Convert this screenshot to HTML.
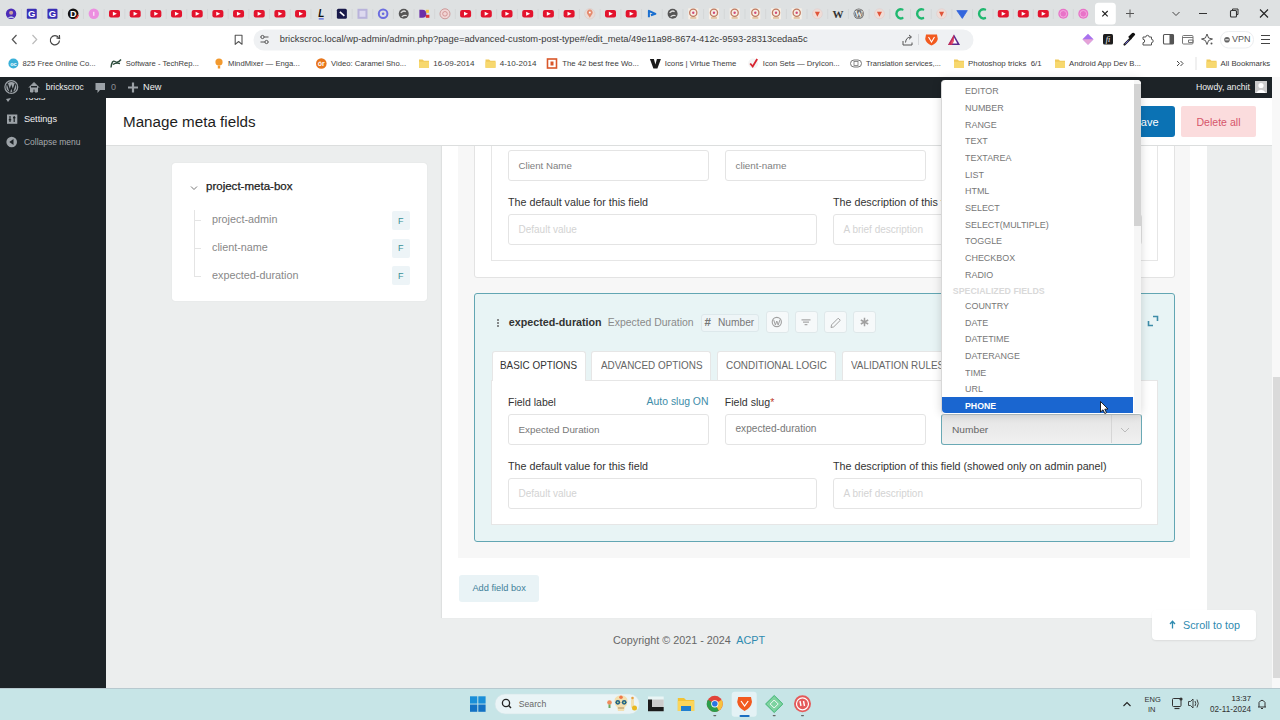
<!DOCTYPE html>
<html><head><meta charset="utf-8"><style>
*{box-sizing:border-box;margin:0;padding:0}
html,body{width:1280px;height:720px;overflow:hidden;background:#fff;font-family:"Liberation Sans",sans-serif;position:relative}
.a{position:absolute}
.t{position:absolute;white-space:nowrap;line-height:1}
svg{position:absolute;overflow:visible}
</style></head><body>
<div class="a" style="left:0px;top:0px;width:1280px;height:26px;background:#dee1e2"></div>
<div class="a" style="left:0px;top:26px;width:1280px;height:26px;background:#fff"></div>
<div class="a" style="left:0px;top:52px;width:1280px;height:25px;background:#fff"></div>
<div class="a" style="left:0px;top:77px;width:1272px;height:21px;background:#1d2327"></div>
<div class="a" style="left:0px;top:98px;width:106.5px;height:590px;background:#1d2327"></div>
<div class="a" style="left:106px;top:98px;width:1166px;height:590px;background:#eceeee"></div>
<div class="a" style="left:1272px;top:77px;width:8px;height:611px;background:#f8f8f8"></div>
<div class="a" style="left:1273px;top:377px;width:7px;height:301px;background:#dadada"></div>
<svg style="left:0;top:0" width="1280" height="26"><circle cx="11.10" cy="13.80" r="5.2" fill="#4b2bb8"/><circle cx="11.10" cy="12.80" r="2" fill="#c9a0a0"/><path d="M7.60 18.00 Q11.10 14.30 14.60 18.00Z" fill="#b8c8e8"/><rect x="20.94" y="9" width="1" height="10" fill="#d4d7d8"/><rect x="26.78" y="8.80" width="10" height="10" rx="1" fill="#3a2fb5"/><text x="31.78" y="17.20" font-size="9.5" font-weight="700" fill="#fff" text-anchor="middle" font-family="Liberation Sans">G</text><rect x="41.62" y="9" width="1" height="10" fill="#d4d7d8"/><rect x="47.46" y="8.80" width="10" height="10" rx="1" fill="#3a2fb5"/><text x="52.46" y="17.20" font-size="9.5" font-weight="700" fill="#fff" text-anchor="middle" font-family="Liberation Sans">G</text><rect x="62.30" y="9" width="1" height="10" fill="#d4d7d8"/><circle cx="73.14" cy="13.80" r="5.3" fill="#111"/><path d="M75.14 18.60 A5.3 5.3 0 0 0 78.34 14.80" stroke="#e33" stroke-width="1.4" fill="none"/><text x="73.14" y="17.10" font-size="9" font-weight="700" fill="#fff" text-anchor="middle" font-family="Liberation Sans">D</text><rect x="82.98" y="9" width="1" height="10" fill="#d4d7d8"/><circle cx="93.82" cy="13.80" r="5.2" fill="#ec8fe0"/><rect x="93.32" y="11.80" width="1" height="4" fill="#fff"/><rect x="103.66" y="9" width="1" height="10" fill="#d4d7d8"/><rect x="109.00" y="10.00" width="11" height="7.6" rx="2" fill="#e3132d"/><path d="M112.90 11.80 L116.90 13.80 L112.90 15.80Z" fill="#fff"/><rect x="124.34" y="9" width="1" height="10" fill="#d4d7d8"/><rect x="129.68" y="10.00" width="11" height="7.6" rx="2" fill="#e3132d"/><path d="M133.58 11.80 L137.58 13.80 L133.58 15.80Z" fill="#fff"/><rect x="145.01" y="9" width="1" height="10" fill="#d4d7d8"/><rect x="150.35" y="10.00" width="11" height="7.6" rx="2" fill="#e3132d"/><path d="M154.25 11.80 L158.25 13.80 L154.25 15.80Z" fill="#fff"/><rect x="165.69" y="9" width="1" height="10" fill="#d4d7d8"/><rect x="171.03" y="10.00" width="11" height="7.6" rx="2" fill="#e3132d"/><path d="M174.93 11.80 L178.93 13.80 L174.93 15.80Z" fill="#fff"/><rect x="186.36" y="9" width="1" height="10" fill="#d4d7d8"/><rect x="191.70" y="10.00" width="11" height="7.6" rx="2" fill="#e3132d"/><path d="M195.60 11.80 L199.60 13.80 L195.60 15.80Z" fill="#fff"/><rect x="207.04" y="9" width="1" height="10" fill="#d4d7d8"/><rect x="212.38" y="10.00" width="11" height="7.6" rx="2" fill="#e3132d"/><path d="M216.28 11.80 L220.28 13.80 L216.28 15.80Z" fill="#fff"/><rect x="227.71" y="9" width="1" height="10" fill="#d4d7d8"/><rect x="233.05" y="10.00" width="11" height="7.6" rx="2" fill="#e3132d"/><path d="M236.95 11.80 L240.95 13.80 L236.95 15.80Z" fill="#fff"/><rect x="248.39" y="9" width="1" height="10" fill="#d4d7d8"/><rect x="253.73" y="10.00" width="11" height="7.6" rx="2" fill="#e3132d"/><path d="M257.62 11.80 L261.62 13.80 L257.62 15.80Z" fill="#fff"/><rect x="269.06" y="9" width="1" height="10" fill="#d4d7d8"/><rect x="274.40" y="10.00" width="11" height="7.6" rx="2" fill="#e3132d"/><path d="M278.30 11.80 L282.30 13.80 L278.30 15.80Z" fill="#fff"/><rect x="289.74" y="9" width="1" height="10" fill="#d4d7d8"/><rect x="295.07" y="10.00" width="11" height="7.6" rx="2" fill="#e3132d"/><path d="M298.97 11.80 L302.97 13.80 L298.97 15.80Z" fill="#fff"/><rect x="310.41" y="9" width="1" height="10" fill="#d4d7d8"/><text x="321.25" y="17.30" font-size="10" font-weight="700" font-style="italic" fill="#111" text-anchor="middle" font-family="Liberation Sans">L</text><rect x="318.75" y="18.10" width="5" height="1.5" fill="#6a7de0"/><rect x="331.06" y="9" width="1" height="10" fill="#d4d7d8"/><rect x="336.87" y="8.80" width="10" height="10" rx="1.5" fill="#18194a"/><path d="M339.87 11.80 L344.37 15.80" stroke="#fff" stroke-width="1.6"/><rect x="351.68" y="9" width="1" height="10" fill="#d4d7d8"/><rect x="357.49" y="8.80" width="10" height="10" fill="#b9b3db"/><rect x="359.49" y="10.80" width="6" height="6" fill="#ddd9ef"/><rect x="372.30" y="9" width="1" height="10" fill="#d4d7d8"/><circle cx="383.11" cy="13.80" r="4.3" fill="none" stroke="#6b6de0" stroke-width="2"/><circle cx="383.11" cy="13.80" r="1.3" fill="#6b6de0"/><rect x="392.92" y="9" width="1" height="10" fill="#d4d7d8"/><circle cx="403.74" cy="13.80" r="5" fill="#555"/><path d="M400.74 12.80 Q403.74 9.80 405.74 11.80 M401.74 16.80 Q404.74 14.80 406.74 15.80" stroke="#ddd" stroke-width="1.2" fill="none"/><rect x="413.55" y="9" width="1" height="10" fill="#d4d7d8"/><path d="M419.36 9.80 H422.36 A4 4 0 0 1 422.36 17.80 H419.36Z" fill="#6b2fa8"/><rect x="425.86" y="9.80" width="3" height="3" fill="#f4c542"/><rect x="425.86" y="14.80" width="3.5" height="3" fill="#d33"/><rect x="434.17" y="9" width="1" height="10" fill="#d4d7d8"/><circle cx="444.98" cy="13.80" r="5" fill="#f1d5d5" stroke="#c99" stroke-width="1"/><circle cx="444.98" cy="13.80" r="2.3" fill="none" stroke="#c88" stroke-width="0.8"/><rect x="454.79" y="9" width="1" height="10" fill="#d4d7d8"/><rect x="460.10" y="10.00" width="11" height="7.6" rx="2" fill="#e3132d"/><path d="M464.00 11.80 L468.00 13.80 L464.00 15.80Z" fill="#fff"/><rect x="475.45" y="9" width="1" height="10" fill="#d4d7d8"/><rect x="480.80" y="10.00" width="11" height="7.6" rx="2" fill="#e3132d"/><path d="M484.70 11.80 L488.70 13.80 L484.70 15.80Z" fill="#fff"/><rect x="496.15" y="9" width="1" height="10" fill="#d4d7d8"/><rect x="501.50" y="10.00" width="11" height="7.6" rx="2" fill="#e3132d"/><path d="M505.40 11.80 L509.40 13.80 L505.40 15.80Z" fill="#fff"/><rect x="516.85" y="9" width="1" height="10" fill="#d4d7d8"/><rect x="522.20" y="10.00" width="11" height="7.6" rx="2" fill="#e3132d"/><path d="M526.10 11.80 L530.10 13.80 L526.10 15.80Z" fill="#fff"/><rect x="537.55" y="9" width="1" height="10" fill="#d4d7d8"/><rect x="542.90" y="10.00" width="11" height="7.6" rx="2" fill="#e3132d"/><path d="M546.80 11.80 L550.80 13.80 L546.80 15.80Z" fill="#fff"/><rect x="558.25" y="9" width="1" height="10" fill="#d4d7d8"/><rect x="563.60" y="10.00" width="11" height="7.6" rx="2" fill="#e3132d"/><path d="M567.50 11.80 L571.50 13.80 L567.50 15.80Z" fill="#fff"/><rect x="578.95" y="9" width="1" height="10" fill="#d4d7d8"/><circle cx="589.80" cy="13.80" r="5.2" fill="#eadbd6" stroke="#d9c9c4" stroke-width="0.6"/><path d="M589.80 17.80 L587.20 13.80 A2.9 2.9 0 1 1 592.40 13.80Z" fill="#e58a6e"/><circle cx="589.80" cy="12.60" r="1" fill="#fff"/><rect x="599.65" y="9" width="1" height="10" fill="#d4d7d8"/><rect x="605.00" y="10.00" width="11" height="7.6" rx="2" fill="#e3132d"/><path d="M608.90 11.80 L612.90 13.80 L608.90 15.80Z" fill="#fff"/><rect x="620.35" y="9" width="1" height="10" fill="#d4d7d8"/><rect x="625.70" y="10.00" width="11" height="7.6" rx="2" fill="#e3132d"/><path d="M629.60 11.80 L633.60 13.80 L629.60 15.80Z" fill="#fff"/><rect x="641.05" y="9" width="1" height="10" fill="#d4d7d8"/><path d="M648.90 17.30 V10.80 L655.40 13.80 L650.90 15.30" stroke="#1a6fd0" stroke-width="2" fill="none" stroke-linejoin="round"/><rect x="661.74" y="9" width="1" height="10" fill="#d4d7d8"/><circle cx="672.59" cy="13.80" r="5" fill="#555"/><path d="M669.59 12.80 Q672.59 9.80 674.59 11.80 M670.59 16.80 Q673.59 14.80 675.59 15.80" stroke="#ddd" stroke-width="1.2" fill="none"/><rect x="682.43" y="9" width="1" height="10" fill="#d4d7d8"/><rect x="688.27" y="8.30" width="10" height="11" fill="#f7efe6"/><circle cx="693.27" cy="12.80" r="3.6" fill="none" stroke="#c07a60" stroke-width="1.3"/><circle cx="693.27" cy="12.80" r="1.2" fill="#d04a7a"/><rect x="690.27" y="17.30" width="6" height="1.3" fill="#d9b48a"/><rect x="703.11" y="9" width="1" height="10" fill="#d4d7d8"/><rect x="708.95" y="8.30" width="10" height="11" fill="#f7efe6"/><circle cx="713.95" cy="12.80" r="3.6" fill="none" stroke="#c07a60" stroke-width="1.3"/><circle cx="713.95" cy="12.80" r="1.2" fill="#d04a7a"/><rect x="710.95" y="17.30" width="6" height="1.3" fill="#d9b48a"/><rect x="723.80" y="9" width="1" height="10" fill="#d4d7d8"/><rect x="729.64" y="8.30" width="10" height="11" fill="#f7efe6"/><circle cx="734.64" cy="12.80" r="3.6" fill="none" stroke="#c07a60" stroke-width="1.3"/><circle cx="734.64" cy="12.80" r="1.2" fill="#d04a7a"/><rect x="731.64" y="17.30" width="6" height="1.3" fill="#d9b48a"/><rect x="744.48" y="9" width="1" height="10" fill="#d4d7d8"/><rect x="750.32" y="8.30" width="10" height="11" fill="#f7efe6"/><circle cx="755.32" cy="12.80" r="3.6" fill="none" stroke="#c07a60" stroke-width="1.3"/><circle cx="755.32" cy="12.80" r="1.2" fill="#d04a7a"/><rect x="752.32" y="17.30" width="6" height="1.3" fill="#d9b48a"/><rect x="765.17" y="9" width="1" height="10" fill="#d4d7d8"/><rect x="771.01" y="8.30" width="10" height="11" fill="#f7efe6"/><circle cx="776.01" cy="12.80" r="3.6" fill="none" stroke="#c07a60" stroke-width="1.3"/><circle cx="776.01" cy="12.80" r="1.2" fill="#d04a7a"/><rect x="773.01" y="17.30" width="6" height="1.3" fill="#d9b48a"/><rect x="785.85" y="9" width="1" height="10" fill="#d4d7d8"/><rect x="791.69" y="8.30" width="10" height="11" fill="#f7efe6"/><circle cx="796.69" cy="12.80" r="3.6" fill="none" stroke="#c07a60" stroke-width="1.3"/><circle cx="796.69" cy="12.80" r="1.2" fill="#d04a7a"/><rect x="793.69" y="17.30" width="6" height="1.3" fill="#d9b48a"/><rect x="806.54" y="9" width="1" height="10" fill="#d4d7d8"/><circle cx="817.38" cy="13.80" r="5" fill="#f0dcd6" stroke="#dcc" stroke-width="0.6"/><path d="M814.88 11.80 H819.88 L817.38 16.80Z" fill="#e0553a"/><rect x="827.22" y="9" width="1" height="10" fill="#d4d7d8"/><text x="838.07" y="17.80" font-size="11" font-weight="700" fill="#333" text-anchor="middle" font-family="Liberation Serif">W</text><rect x="847.91" y="9" width="1" height="10" fill="#d4d7d8"/><circle cx="858.75" cy="13.80" r="5.2" fill="#666"/><circle cx="858.75" cy="13.80" r="4.2" fill="none" stroke="#eee" stroke-width="0.6"/><text x="858.75" y="16.80" font-size="8" font-weight="700" fill="#eee" text-anchor="middle" font-family="Liberation Serif">W</text><rect x="868.61" y="9" width="1" height="10" fill="#d4d7d8"/><circle cx="879.46" cy="13.80" r="5" fill="#f0dcd6" stroke="#dcc" stroke-width="0.6"/><path d="M876.96 11.80 H881.96 L879.46 16.80Z" fill="#e0553a"/><rect x="889.32" y="9" width="1" height="10" fill="#d4d7d8"/><path d="M902.37 9.50 A4.4 4.6 0 1 0 902.37 18.10" stroke="#1fb86f" stroke-width="2.4" fill="none" stroke-linecap="round"/><rect x="910.02" y="9" width="1" height="10" fill="#d4d7d8"/><path d="M923.08 9.50 A4.4 4.6 0 1 0 923.08 18.10" stroke="#1fb86f" stroke-width="2.4" fill="none" stroke-linecap="round"/><rect x="930.73" y="9" width="1" height="10" fill="#d4d7d8"/><circle cx="941.59" cy="13.80" r="5" fill="#f0dcd6" stroke="#dcc" stroke-width="0.6"/><path d="M939.09 11.80 H944.09 L941.59 16.80Z" fill="#e0553a"/><rect x="951.44" y="9" width="1" height="10" fill="#d4d7d8"/><path d="M956.80 10.60 H967.30 L962.30 18.40Z" fill="#3366dd" stroke="#3366dd" stroke-width="0.8" stroke-linejoin="round"/><rect x="972.05" y="9" width="1" height="10" fill="#d4d7d8"/><path d="M985.00 9.50 A4.4 4.6 0 1 0 985.00 18.10" stroke="#1fb86f" stroke-width="2.4" fill="none" stroke-linecap="round"/><rect x="992.55" y="9" width="1" height="10" fill="#d4d7d8"/><rect x="997.80" y="10.00" width="11" height="7.6" rx="2" fill="#e3132d"/><path d="M1001.70 11.80 L1005.70 13.80 L1001.70 15.80Z" fill="#fff"/><rect x="1012.80" y="9" width="1" height="10" fill="#d4d7d8"/><rect x="1017.80" y="10.00" width="11" height="7.6" rx="2" fill="#e3132d"/><path d="M1021.70 11.80 L1025.70 13.80 L1021.70 15.80Z" fill="#fff"/><rect x="1032.80" y="9" width="1" height="10" fill="#d4d7d8"/><rect x="1037.80" y="10.00" width="11" height="7.6" rx="2" fill="#e3132d"/><path d="M1041.70 11.80 L1045.70 13.80 L1041.70 15.80Z" fill="#fff"/><rect x="1052.80" y="9" width="1" height="10" fill="#d4d7d8"/><circle cx="1063.30" cy="13.80" r="5" fill="#e873c8"/><circle cx="1063.30" cy="13.80" r="3.3" fill="none" stroke="#f6bde6" stroke-width="0.7"/><rect x="1072.80" y="9" width="1" height="10" fill="#d4d7d8"/><circle cx="1083.30" cy="13.80" r="5" fill="#e873c8"/><circle cx="1083.30" cy="13.80" r="3.3" fill="none" stroke="#f6bde6" stroke-width="0.7"/><rect x="1095" y="2.8" width="20.8" height="21.6" rx="3.5" fill="#fff"/><path d="M1102.3 11 L1107.7 16.4 M1107.7 11 L1102.3 16.4" stroke="#222" stroke-width="1.1"/><path d="M1130 9.5 V17.5 M1126 13.5 H1134" stroke="#555" stroke-width="1"/><path d="M1172.5 12 L1176 15.5 L1179.5 12" stroke="#444" stroke-width="1" fill="none"/><path d="M1199 13.5 H1207" stroke="#333" stroke-width="1"/><rect x="1230.5" y="10.5" width="6" height="6.5" fill="none" stroke="#333" stroke-width="1.1" rx="1"/><path d="M1232.5 10.5 V9 H1238 V14.5 H1236.5" stroke="#333" stroke-width="1" fill="none"/><path d="M1260 9.5 L1268 17.5 M1268 9.5 L1260 17.5" stroke="#222" stroke-width="1.1"/></svg>
<svg style="left:0;top:0" width="1280" height="52"><path d="M16.5 35 L12.3 39.5 L16.5 44" stroke="#555" stroke-width="1.2" fill="none"/><path d="M32.5 35 L36.7 39.5 L32.5 44" stroke="#bbb" stroke-width="1.2" fill="none"/><path d="M58.6 37.5 A4.6 4.6 0 1 0 59.5 40.5" stroke="#444" stroke-width="1.2" fill="none"/><path d="M56.5 37.8 L59.6 38.4 L59.4 35" stroke="#444" stroke-width="1.2" fill="none"/><path d="M235.2 35.2 H242 V44.3 L238.6 41.5 L235.2 44.3Z" stroke="#555" stroke-width="1.1" fill="none" stroke-linejoin="round"/><rect x="253.5" y="29.5" width="720" height="21" rx="10.5" fill="#eff1f3"/><path d="M260.5 37 H268.5 M260.5 42 H268.5" stroke="#555" stroke-width="1"/><circle cx="262.5" cy="37" r="1.6" fill="#eff1f3" stroke="#555" stroke-width="1"/><circle cx="266.5" cy="42" r="1.6" fill="#eff1f3" stroke="#555" stroke-width="1"/><path d="M903 41 V45 H912 V42.5 M905.5 42.5 Q906 37 911 37 M909 35 L911.5 37 L909 39.3" stroke="#555" stroke-width="1" fill="none"/><rect x="918" y="34" width="1" height="11" fill="#d5d7da"/><path d="M926 34.5 H937 L937.8 39 Q937 43 931.5 45.5 Q926 43 925.2 39Z" fill="#f25a1f"/><path d="M928.5 37 L931.5 42 L934.5 37" stroke="#fff" stroke-width="1.1" fill="none"/><path d="M954 34.5 L960 45 H948Z" fill="#5c2a8f"/><path d="M954 37.5 L957.3 43.5 H950.7Z" fill="#fff"/><path d="M954 34.5 L948 45 H952 L954 41" fill="#e0304c" opacity=".8"/><path d="M1088 33.8 L1093.5 39.3 L1088 44.8 L1082.5 39.3Z" fill="#a872ee"/><path d="M1088 39.3 L1093.5 39.3 L1088 44.8 L1082.5 39.3Z" fill="#e6a3d6"/><rect x="1103" y="34" width="10" height="10.5" rx="1.5" fill="#1d1d1d"/><text x="1108" y="42" font-size="8" font-style="italic" fill="#fff" text-anchor="middle" font-family="Liberation Serif">fi</text><path d="M1124.5 44.5 L1130.5 38.5" stroke="#222" stroke-width="2.2" stroke-linecap="round"/><path d="M1129 37 L1132.5 33.5 Q1134 33 1134.5 34.5 L1131 38.5Z" fill="#111" stroke="#111" stroke-width="1.2"/><path d="M1125.3 43.7 L1128.5 40.5" stroke="#6a5fe0" stroke-width="1"/><path d="M1143 37 H1145.8 A1.7 1.7 0 0 1 1149.2 37 H1151.5 V39.3 A1.7 1.7 0 0 1 1151.5 42.7 V45 H1143 V42.7 A1.7 1.7 0 0 0 1143 39.3Z" stroke="#555" stroke-width="1" fill="none" stroke-linejoin="round"/><rect x="1163.5" y="34.5" width="10" height="9.5" rx="1" stroke="#555" stroke-width="1.1" fill="none"/><rect x="1169.5" y="34.5" width="4" height="9.5" fill="#555"/><rect x="1182.5" y="35.5" width="10.5" height="8.5" rx="1" stroke="#777" stroke-width="1" fill="none"/><path d="M1182.5 37.5 H1193 M1188.5 40 H1193 V42.5 H1188.5Z" stroke="#777" stroke-width="1" fill="none"/><path d="M1207 34 L1208.6 38 L1212.5 39 L1208.6 40.5 L1207 44.5 L1205.4 40.5 L1201.5 39 L1205.4 38Z" stroke="#555" stroke-width="1" fill="none"/><circle cx="1211.5" cy="43.5" r="1" fill="#555"/><rect x="1220.5" y="31.5" width="33" height="16.5" rx="8" fill="#fff" stroke="#eceef0" stroke-width="1"/><circle cx="1227" cy="39.8" r="2.8" fill="#666"/><rect x="1225.3" y="39.3" width="3.4" height="1" fill="#fff"/><path d="M1261 35.5 H1270 M1261 39.5 H1270 M1261 43.5 H1270" stroke="#444" stroke-width="1.1"/></svg>
<div class="t" style="left:1232px;top:35.38px;font-size:9px;color:#555;font-weight:400;">VPN</div>
<div class="t" style="left:279.75px;top:35.48px;font-size:9.36px;color:#3a3a3a;font-weight:400;">brickscroc.local/wp-admin/admin.php?page=advanced-custom-post-type#/edit_meta/49e11a98-8674-412c-9593-28313cedaa5c</div>
<svg style="left:0;top:0" width="1280" height="77"><circle cx="13.4" cy="63.5" r="5" fill="#3ab0d8"/><text x="13.4" y="65.5" font-size="5.5" font-weight="700" fill="#fff" text-anchor="middle" font-family="Liberation Sans">oc</text><path d="M111 67.5 Q112 59.5 115 61.5 Q118 63.5 121 59.5 M113 64.5 Q116 62.5 120 63.5" stroke="#2a4a3a" stroke-width="1.4" fill="none"/><circle cx="219" cy="62.0" r="3.6" fill="#f2992e"/><rect x="217.8" y="65.5" width="2.4" height="3" fill="#f2992e"/><circle cx="321.3" cy="63.5" r="5.3" fill="#e8761c"/><text x="321.3" y="66.0" font-size="7" font-weight="700" fill="#fff" text-anchor="middle" font-family="Liberation Sans">ór</text><path d="M419 59.5 H422.5 L424 60.7 H429 V67.8 H419Z" fill="#f0c95a"/><rect x="419" y="61.7" width="10" height="6.1" fill="#f7d86e"/><path d="M485.5 59.5 H489.0 L490.5 60.7 H495.5 V67.8 H485.5Z" fill="#f0c95a"/><rect x="485.5" y="61.7" width="10" height="6.1" fill="#f7d86e"/><rect x="547.5" y="59.0" width="9" height="9" fill="none" stroke="#d9572a" stroke-width="1.6"/><rect x="550.5" y="61.5" width="3" height="4" fill="#d9572a"/><path d="M649.9 59.0 H653.9 L655.4 64.5 L656.9 59.0 H660.9 L657.4 68.5 H653.4Z" fill="#1a1a1a"/><circle cx="753.2" cy="63.5" r="5" fill="#f4f4f4"/><path d="M750.2 63.5 L752.7 66.5 L757.2 59.0" stroke="#d8242f" stroke-width="1.8" fill="none"/><rect x="850.5" y="60.0" width="11" height="7" rx="3.5" fill="none" stroke="#777" stroke-width="1"/><rect x="854" y="61.5" width="4" height="4" fill="none" stroke="#777" stroke-width="0.8"/><path d="M954 59.5 H957.5 L959 60.7 H964 V67.8 H954Z" fill="#f0c95a"/><rect x="954" y="61.7" width="10" height="6.1" fill="#f7d86e"/><path d="M1055 59.5 H1058.5 L1060 60.7 H1065 V67.8 H1055Z" fill="#f0c95a"/><rect x="1055" y="61.7" width="10" height="6.1" fill="#f7d86e"/><path d="M1206.5 59.5 H1210.0 L1211.5 60.7 H1216.5 V67.8 H1206.5Z" fill="#f0c95a"/><rect x="1206.5" y="61.7" width="10" height="6.1" fill="#f7d86e"/><path d="M1177 61 L1179.5 63.5 L1177 66 M1180.5 61 L1183 63.5 L1180.5 66" stroke="#444" stroke-width="1" fill="none"/><rect x="1195.5" y="57" width="1" height="13" fill="#e2e2e2"/></svg>
<div class="t" style="left:22.5px;top:59.82px;font-size:7.66px;color:#3c3c3c;font-weight:400;">825 Free Online Co...</div>
<div class="t" style="left:125.7px;top:59.84px;font-size:7.63px;color:#3c3c3c;font-weight:400;">Software - TechRep...</div>
<div class="t" style="left:228px;top:59.78px;font-size:7.7px;color:#3c3c3c;font-weight:400;">MindMixer — Enga...</div>
<div class="t" style="left:331px;top:59.78px;font-size:7.7px;color:#3c3c3c;font-weight:400;">Video: Caramel Sho...</div>
<div class="t" style="left:433.2px;top:59.97px;font-size:8.07px;color:#3c3c3c;font-weight:400;">16-09-2014</div>
<div class="t" style="left:499.7px;top:59.97px;font-size:8.07px;color:#3c3c3c;font-weight:400;">4-10-2014</div>
<div class="t" style="left:562.2px;top:59.71px;font-size:7.78px;color:#3c3c3c;font-weight:400;">The 42 best free Wo...</div>
<div class="t" style="left:664.8px;top:59.70px;font-size:7.8px;color:#3c3c3c;font-weight:400;">Icons | Virtue Theme</div>
<div class="t" style="left:762.8px;top:59.78px;font-size:7.7px;color:#3c3c3c;font-weight:400;">Icon Sets — DryIcon...</div>
<div class="t" style="left:866px;top:59.93px;font-size:7.53px;color:#3c3c3c;font-weight:400;">Translation services,...</div>
<div class="t" style="left:968px;top:59.61px;font-size:7.9px;color:#3c3c3c;font-weight:400;">Photoshop tricks  6/1</div>
<div class="t" style="left:1069px;top:59.74px;font-size:7.75px;color:#3c3c3c;font-weight:400;">Android App Dev B...</div>
<div class="t" style="left:1220.6px;top:59.71px;font-size:7.78px;color:#3c3c3c;font-weight:400;">All Bookmarks</div>
<svg style="left:0;top:0" width="1280" height="98"><circle cx="11.3" cy="87" r="7" fill="#9ca2a7"/><circle cx="11.3" cy="87" r="5.8" fill="#1d2327"/><circle cx="11.3" cy="87" r="5" fill="#9ca2a7"/><path d="M7.5 84 L9.8 91 L11.3 86.5 L12.8 91 L15.1 84" stroke="#1d2327" stroke-width="1.4" fill="none"/><path d="M29 87.5 L34 82.5 L39 87.5 M30.5 86 V92 H33 V89 H35 V92 H37.5 V86" fill="#9ca2a7" stroke="#9ca2a7" stroke-width="1"/><path d="M95.5 83 H105 V90 H100 L97.5 93 V90 H95.5Z" fill="#9ca2a7"/><path d="M133 82.5 V92.5 M128 87.5 H138" stroke="#9ca2a7" stroke-width="2.2"/><rect x="1255" y="81" width="12" height="12" fill="#ccc"/><circle cx="1261" cy="85.5" r="2.6" fill="#fff"/><path d="M1256 93 Q1261 86.5 1266 93Z" fill="#fff"/></svg>
<div class="t" style="left:45.8px;top:83.36px;font-size:8.44px;color:#f0f0f1;font-weight:400;">brickscroc</div>
<div class="t" style="left:111px;top:82.88px;font-size:9px;color:#8c8f94;font-weight:400;">0</div>
<div class="t" style="left:143px;top:82.71px;font-size:9.2px;color:#f0f0f1;font-weight:400;">New</div>
<div class="t" style="left:1196px;top:83.14px;font-size:8.7px;color:#f0f0f1;font-weight:400;">Howdy, anchit</div>
<svg style="left:0;top:0" width="106" height="160"><path d="M6 99 L11 98 L8 102Z" fill="#9ca2a7"/><rect x="7" y="114.5" width="10.3" height="9.3" fill="#9ca2a7"/><path d="M10 116 V122 M14.2 116 V122" stroke="#1d2327" stroke-width="1.2"/><rect x="8.8" y="119" width="2.4" height="1.4" fill="#1d2327"/><rect x="13" y="117" width="2.4" height="1.4" fill="#1d2327"/><circle cx="11.7" cy="142" r="5.3" fill="#9ca2a7"/><path d="M13.5 139 L9.3 142 L13.5 145Z" fill="#1d2327"/></svg>
<div class="a" style="left:0;top:98px;width:106px;height:20px;overflow:hidden"><div class="t" style="left:24px;top:-5.29px;font-size:9.2px;color:#f0f0f1">Tools</div></div>
<div class="t" style="left:23.9px;top:114.72px;font-size:9.19px;color:#f0f0f1;font-weight:400;">Settings</div>
<div class="t" style="left:24px;top:137.84px;font-size:8.46px;color:#a7aaad;font-weight:400;">Collapse menu</div>
<div class="a" style="left:172px;top:163.3px;width:255px;height:138px;background:#fff;border-radius:3px;box-shadow:0 0 1px rgba(0,0,0,.15)"></div>
<svg style="left:190px;top:185px" width="8" height="6"><path d="M1 1.5 L4 4.5 L7 1.5" stroke="#777" stroke-width="1" fill="none"/></svg>
<div class="t" style="left:205.8px;top:181.43px;font-size:11.3px;color:#222;font-weight:400;-webkit-text-stroke:0.25px #222;transform:scaleX(1.02);transform-origin:0 0;">project-meta-box</div>
<div class="a" style="left:193.5px;top:210px;width:1px;height:67px;background:#e4e4e4"></div>
<div class="a" style="left:194px;top:220px;width:7px;height:1px;background:#e4e4e4"></div>
<div class="a" style="left:194px;top:248px;width:7px;height:1px;background:#e4e4e4"></div>
<div class="a" style="left:194px;top:276px;width:7px;height:1px;background:#e4e4e4"></div>
<div class="t" style="left:212px;top:213.86px;font-size:10.8px;color:#888;font-weight:400;">project-admin</div>
<div class="t" style="left:212px;top:241.86px;font-size:10.8px;color:#888;font-weight:400;">client-name</div>
<div class="t" style="left:212px;top:270.36px;font-size:10.8px;color:#888;font-weight:400;">expected-duration</div>
<div class="a" style="left:392px;top:211px;width:18px;height:19px;background:#edf4f7;border-radius:2px"></div>
<div class="t" style="left:398px;top:216.58px;font-size:9px;color:#3a9096;font-weight:400;">F</div>
<div class="a" style="left:392px;top:238.5px;width:18px;height:19px;background:#edf4f7;border-radius:2px"></div>
<div class="t" style="left:398px;top:244.08px;font-size:9px;color:#3a9096;font-weight:400;">F</div>
<div class="a" style="left:392px;top:266px;width:18px;height:19px;background:#edf4f7;border-radius:2px"></div>
<div class="t" style="left:398px;top:271.58px;font-size:9px;color:#3a9096;font-weight:400;">F</div>
<div class="a" style="left:442px;top:145px;width:765px;height:473px;background:#fff;box-shadow:-1px 0 1px rgba(0,0,0,.06)"></div>
<div class="a" style="left:458px;top:145px;width:732px;height:413px;background:#f7f7f7"></div>
<div class="a" style="left:474px;top:130px;width:701px;height:147.5px;background:#fff;border:1px solid #e3e3e3;border-radius:3px"></div>
<div class="a" style="left:490.5px;top:130px;width:667.5px;height:131px;background:#fff;border:1px solid #e6e6e6"></div>
<div class="a" style="left:508px;top:150px;width:201px;height:30.8px;background:#fff;border:1px solid #e4e4e4;border-radius:3px"></div>
<div class="t" style="left:518.5px;top:160.79px;font-size:9.7px;color:#808080;font-weight:400;">Client Name</div>
<div class="a" style="left:725px;top:150px;width:201px;height:30.8px;background:#fff;border:1px solid #e4e4e4;border-radius:3px"></div>
<div class="t" style="left:735.5px;top:160.62px;font-size:9.9px;color:#808080;font-weight:400;">client-name</div>
<div class="t" style="left:508px;top:196.93px;font-size:10.72px;color:#333;font-weight:400;">The default value for this field</div>
<div class="t" style="left:833px;top:196.93px;font-size:10.72px;color:#333;font-weight:400;">The description of this field (showed only on admin panel)</div>
<div class="a" style="left:508px;top:214px;width:309px;height:30.8px;background:#fff;border:1px solid #e4e4e4;border-radius:3px"></div>
<div class="t" style="left:518.5px;top:224.53px;font-size:10px;color:#d3d3d3;font-weight:400;">Default value</div>
<div class="a" style="left:833px;top:214px;width:309px;height:30.8px;background:#fff;border:1px solid #e4e4e4;border-radius:3px"></div>
<div class="t" style="left:843.5px;top:224.53px;font-size:10px;color:#d3d3d3;font-weight:400;">A brief description</div>
<div class="a" style="left:474px;top:293px;width:701px;height:248.5px;background:#e8f4f5;border:1px solid #62a6b3;border-radius:3px"></div>
<div class="a" style="left:496.5px;top:318.5px;width:2px;height:2px;background:#666;border-radius:1px"></div>
<div class="a" style="left:496.5px;top:321.5px;width:2px;height:2px;background:#666;border-radius:1px"></div>
<div class="a" style="left:496.5px;top:324.5px;width:2px;height:2px;background:#666;border-radius:1px"></div>
<div class="t" style="left:508.75px;top:316.92px;font-size:10.73px;color:#333;font-weight:700;">expected-duration</div>
<div class="t" style="left:607.8px;top:318.15px;font-size:10.45px;color:#8a8a8a;font-weight:400;">Expected Duration</div>
<div class="a" style="left:700.5px;top:314.2px;width:58.6px;height:18.2px;background:#eef5f7;border:1px solid #dde8eb;border-radius:3px"></div>
<div class="t" style="left:704.6px;top:317.47px;font-size:11.5px;color:#777;font-weight:700;">#</div>
<div class="t" style="left:718px;top:317.87px;font-size:10.2px;color:#777;font-weight:400;">Number</div>
<div class="a" style="left:765.5px;top:310.6px;width:23px;height:22.6px;background:#f6f9fa;border:1px solid #dfe8ea;border-radius:3px"></div>
<div class="a" style="left:794.7px;top:310.6px;width:23px;height:22.6px;background:#f6f9fa;border:1px solid #dfe8ea;border-radius:3px"></div>
<div class="a" style="left:823.8px;top:310.6px;width:23px;height:22.6px;background:#f6f9fa;border:1px solid #dfe8ea;border-radius:3px"></div>
<div class="a" style="left:853px;top:310.6px;width:23px;height:22.6px;background:#f6f9fa;border:1px solid #dfe8ea;border-radius:3px"></div>
<svg style="left:0;top:0" width="1" height="1"><circle cx="776.8" cy="322" r="4.6" fill="none" stroke="#a0a0a0" stroke-width="1.1"/><path d="M773.6 319.6 L775.4 325 L776.8 321 L778.2 325 L780 319.6" stroke="#a0a0a0" stroke-width="1" fill="none"/><path d="M801.5 319.8 H810.5 M803 322.2 H809 M804.6 324.6 H807.4" stroke="#a8a8a8" stroke-width="1.3"/><path d="M831 327.5 L831.6 324.8 L838.2 318.2 L840.3 320.3 L833.7 326.9Z" fill="none" stroke="#a0a0a0" stroke-width="1"/><path d="M864.5 317.8 V326.2 M860.8 320 L868.2 324 M868.2 320 L860.8 324" stroke="#a0a0a0" stroke-width="1.5"/></svg>
<div class="a" style="left:492px;top:351px;width:94px;height:30px;background:#fff;border:1px solid #e6e6e6;border-bottom:none;border-radius:3px 3px 0 0"></div>
<div class="t" style="left:500.3px;top:360.78px;font-size:10.3px;color:#333;font-weight:400;transform:scaleX(0.961);transform-origin:0 0;">BASIC OPTIONS</div>
<div class="a" style="left:591.3px;top:351px;width:120px;height:30px;background:#fff;border:1px solid #e6e6e6;border-bottom:none;border-radius:3px 3px 0 0"></div>
<div class="t" style="left:600.7px;top:360.78px;font-size:10.3px;color:#666;font-weight:400;transform:scaleX(0.961);transform-origin:0 0;">ADVANCED OPTIONS</div>
<div class="a" style="left:717.4px;top:351px;width:119px;height:30px;background:#fff;border:1px solid #e6e6e6;border-bottom:none;border-radius:3px 3px 0 0"></div>
<div class="t" style="left:725.6px;top:360.78px;font-size:10.3px;color:#666;font-weight:400;transform:scaleX(0.961);transform-origin:0 0;">CONDITIONAL LOGIC</div>
<div class="a" style="left:842.4px;top:351px;width:140px;height:30px;background:#fff;border:1px solid #e6e6e6;border-bottom:none;border-radius:3px 3px 0 0"></div>
<div class="t" style="left:850.6px;top:360.78px;font-size:10.3px;color:#666;font-weight:400;transform:scaleX(0.961);transform-origin:0 0;">VALIDATION RULES</div>
<div class="a" style="left:490.5px;top:380px;width:667px;height:145px;background:#fff;border:1px solid #e6e6e6"></div>
<div class="a" style="left:493px;top:379px;width:92px;height:3px;background:#fff"></div>
<div class="t" style="left:508px;top:397.09px;font-size:10.53px;color:#333;font-weight:400;">Field label</div>
<div class="t" style="left:646.6px;top:397.18px;font-size:10.42px;color:#3d8ca8;font-weight:400;">Auto slug ON</div>
<div class="t" style="left:724.8px;top:397.03px;font-size:10.6px;color:#333;font-weight:400;">Field slug<span style="color:#c0392b">*</span></div>
<div class="a" style="left:508px;top:414px;width:201px;height:30.5px;background:#fff;border:1px solid #e4e4e4;border-radius:3px"></div>
<div class="t" style="left:518.5px;top:424.66px;font-size:9.85px;color:#777;font-weight:400;">Expected Duration</div>
<div class="a" style="left:725px;top:414px;width:201px;height:30.5px;background:#fff;border:1px solid #e4e4e4;border-radius:3px"></div>
<div class="t" style="left:735.5px;top:424.43px;font-size:10.12px;color:#777;font-weight:400;">expected-duration</div>
<div class="t" style="left:508px;top:461.13px;font-size:10.72px;color:#333;font-weight:400;">The default value for this field</div>
<div class="t" style="left:833px;top:461.13px;font-size:10.72px;color:#333;font-weight:400;">The description of this field (showed only on admin panel)</div>
<div class="a" style="left:508px;top:478px;width:309px;height:30.5px;background:#fff;border:1px solid #e4e4e4;border-radius:3px"></div>
<div class="t" style="left:518.5px;top:488.54px;font-size:10px;color:#d3d3d3;font-weight:400;">Default value</div>
<div class="a" style="left:833px;top:478px;width:309px;height:30.5px;background:#fff;border:1px solid #e4e4e4;border-radius:3px"></div>
<div class="t" style="left:843.5px;top:488.54px;font-size:10px;color:#d3d3d3;font-weight:400;">A brief description</div>
<svg style="left:1147px;top:315px" width="12" height="12"><path d="M1.5 6 V10.5 H6 M6 1.5 H10.5 V6" stroke="#3d8ca8" stroke-width="1.6" fill="none"/></svg>
<div class="a" style="left:459.2px;top:574.6px;width:80px;height:27.7px;background:#e9f3f6;border-radius:3px"></div>
<div class="t" style="left:472.4px;top:584.37px;font-size:9.25px;color:#3e7f99;font-weight:400;">Add field box</div>
<div class="t" style="left:613px;top:634.86px;font-size:10.8px;color:#666">Copyright © 2021 - 2024&nbsp; <span style="color:#2f8bb0">ACPT</span></div>
<div class="a" style="left:1152px;top:610px;width:104px;height:30px;background:#fff;border-radius:4px;box-shadow:0 1px 2px rgba(0,0,0,.08)"></div>
<div class="t" style="left:1183px;top:619.87px;font-size:10.79px;color:#2f8bb0;font-weight:400;">Scroll to top</div>
<svg style="left:0;top:0" width="1" height="1"><path d="M1172.5 628.5 V621.5 M1170 624 L1172.5 621.3 L1175 624" stroke="#2f8bb0" stroke-width="1.3" fill="none"/></svg>
<div class="a" style="left:106px;top:98px;width:1166px;height:47.5px;background:#fff;border-bottom:1px solid #dcdede"></div>
<div class="t" style="left:123px;top:113.73px;font-size:15.2px;color:#1d1d1d;font-weight:400;">Manage meta fields</div>
<div class="a" style="left:1115px;top:106.3px;width:60px;height:30.5px;background:#0b72b4;border-radius:3px"></div>
<div class="t" style="left:1133.5px;top:116.69px;font-size:11px;color:#fff;font-weight:400;">Save</div>
<div class="a" style="left:1181px;top:106.3px;width:75px;height:30.5px;background:#fbdcdd;border-radius:2px"></div>
<div class="t" style="left:1196.5px;top:117.07px;font-size:10.55px;color:#d6566a;font-weight:400;">Delete all</div>
<div class="a" style="left:941px;top:414px;width:201px;height:30.5px;background:linear-gradient(#e4e4e4,#f1f1f1);border:1px solid #6aa9b5;border-top-color:#b9c4c6;border-radius:3px"></div>
<div class="a" style="left:1111px;top:415px;width:1px;height:28px;background:#d6d6d6"></div>
<div class="t" style="left:951.8px;top:424.50px;font-size:9.8px;color:#666;font-weight:400;transform:scaleX(1.04);transform-origin:0 0;">Number</div>
<svg style="left:1120px;top:427px" width="10" height="6"><path d="M1 1 L5 5 L9 1" stroke="#bbb" stroke-width="1" fill="none"/></svg>
<div class="a" style="left:941px;top:80px;width:200px;height:333.5px;background:#fff;border-left:1px solid #d8d8d8;border-radius:4px 4px 0 4px;box-shadow:0 0 10px rgba(0,0,0,.16)"></div>
<div class="a" style="left:1134px;top:80px;width:7px;height:333px;background:#f6f6f6;border-radius:0 4px 0 0"></div>
<div class="a" style="left:1134px;top:84px;width:7px;height:142px;background:#d3d3d3"></div>
<div class="t" style="left:964.8px;top:86.36px;font-size:9.5px;color:#777;font-weight:400;transform:scaleX(0.94);transform-origin:0 0;">EDITOR</div>
<div class="t" style="left:964.8px;top:103.03px;font-size:9.5px;color:#777;font-weight:400;transform:scaleX(0.94);transform-origin:0 0;">NUMBER</div>
<div class="t" style="left:964.8px;top:119.70px;font-size:9.5px;color:#777;font-weight:400;transform:scaleX(0.94);transform-origin:0 0;">RANGE</div>
<div class="t" style="left:964.8px;top:136.37px;font-size:9.5px;color:#777;font-weight:400;transform:scaleX(0.94);transform-origin:0 0;">TEXT</div>
<div class="t" style="left:964.8px;top:153.04px;font-size:9.5px;color:#777;font-weight:400;transform:scaleX(0.94);transform-origin:0 0;">TEXTAREA</div>
<div class="t" style="left:964.8px;top:169.71px;font-size:9.5px;color:#777;font-weight:400;transform:scaleX(0.94);transform-origin:0 0;">LIST</div>
<div class="t" style="left:964.8px;top:186.38px;font-size:9.5px;color:#777;font-weight:400;transform:scaleX(0.94);transform-origin:0 0;">HTML</div>
<div class="t" style="left:964.8px;top:203.05px;font-size:9.5px;color:#777;font-weight:400;transform:scaleX(0.94);transform-origin:0 0;">SELECT</div>
<div class="t" style="left:964.8px;top:219.72px;font-size:9.5px;color:#777;font-weight:400;transform:scaleX(0.94);transform-origin:0 0;">SELECT(MULTIPLE)</div>
<div class="t" style="left:964.8px;top:236.39px;font-size:9.5px;color:#777;font-weight:400;transform:scaleX(0.94);transform-origin:0 0;">TOGGLE</div>
<div class="t" style="left:964.8px;top:253.06px;font-size:9.5px;color:#777;font-weight:400;transform:scaleX(0.94);transform-origin:0 0;">CHECKBOX</div>
<div class="t" style="left:964.8px;top:269.73px;font-size:9.5px;color:#777;font-weight:400;transform:scaleX(0.94);transform-origin:0 0;">RADIO</div>
<div class="t" style="left:952.8px;top:286.94px;font-size:8.81px;color:#d9d9d9;font-weight:700;">SPECIALIZED FIELDS</div>
<div class="t" style="left:964.8px;top:300.87px;font-size:9.5px;color:#777;font-weight:400;transform:scaleX(0.94);transform-origin:0 0;">COUNTRY</div>
<div class="t" style="left:964.8px;top:317.54px;font-size:9.5px;color:#777;font-weight:400;transform:scaleX(0.94);transform-origin:0 0;">DATE</div>
<div class="t" style="left:964.8px;top:334.21px;font-size:9.5px;color:#777;font-weight:400;transform:scaleX(0.94);transform-origin:0 0;">DATETIME</div>
<div class="t" style="left:964.8px;top:350.88px;font-size:9.5px;color:#777;font-weight:400;transform:scaleX(0.94);transform-origin:0 0;">DATERANGE</div>
<div class="t" style="left:964.8px;top:367.55px;font-size:9.5px;color:#777;font-weight:400;transform:scaleX(0.94);transform-origin:0 0;">TIME</div>
<div class="t" style="left:964.8px;top:384.22px;font-size:9.5px;color:#777;font-weight:400;transform:scaleX(0.94);transform-origin:0 0;">URL</div>
<div class="a" style="left:941.8px;top:396.5px;width:191.2px;height:16.8px;background:#1a66d0;border-radius:0 0 0 4px"></div>
<div class="t" style="left:964.5px;top:400.86px;font-size:9.5px;color:#fff;font-weight:700;transform:scaleX(0.92);transform-origin:0 0;">PHONE</div>
<svg style="left:0;top:0" width="1" height="1"><path d="M1100.5 401.5 V412 L1103 409.8 L1104.8 413.5 L1106.5 412.7 L1104.8 409.2 L1108 409Z" fill="#fff" stroke="#111" stroke-width="0.9" stroke-linejoin="round"/></svg>
<div class="a" style="left:0px;top:688px;width:1280px;height:32px;background:#c7e5e7;border-top:1px solid #b7c9cf"></div>
<svg style="left:0;top:0" width="1280" height="720"><rect x="470" y="696.3" width="7.3" height="7.3" fill="#1a8fd8"/><rect x="478.3" y="696.3" width="7.3" height="7.3" fill="#1a8fd8"/><rect x="470" y="704.5" width="7.3" height="7.3" fill="#1372c4"/><rect x="478.3" y="704.5" width="7.3" height="7.3" fill="#1372c4"/><rect x="495" y="694" width="144.5" height="20" rx="10" fill="#eaf4f6" stroke="#d3e4e8" stroke-width="0.6"/><circle cx="506" cy="703" r="3.6" fill="none" stroke="#222" stroke-width="1.3"/><path d="M508.6 705.6 L511 708" stroke="#222" stroke-width="1.4"/><circle cx="609.5" cy="702.5" r="2.3" fill="#f08a5a"/><rect x="608.5" y="704.5" width="2" height="3.5" fill="#6aa860"/><path d="M614.5 701 Q614.5 695.5 621 695.5 Q627.5 695.5 627.5 701 Q627.5 705 625 707 L624 711 H618 L617 707 Q614.5 705 614.5 701Z" fill="#f3dfb0"/><circle cx="621" cy="697.3" r="1.8" fill="#f07848"/><circle cx="617.8" cy="702.3" r="2.4" fill="#1f5f86"/><circle cx="624.2" cy="702.3" r="2.4" fill="#1f5f86"/><circle cx="617.8" cy="702.3" r=".9" fill="#b8d890"/><circle cx="624.2" cy="702.3" r=".9" fill="#b8d890"/><path d="M618 708 H624" stroke="#b09060" stroke-width="1"/><rect x="631" y="699" width="3" height="9" rx="1" fill="#f2e0b0"/><circle cx="632.5" cy="698" r="1.3" fill="#e8a040"/><circle cx="634.5" cy="708" r="2.5" fill="#e8b820"/><rect x="648" y="696.5" width="15.7" height="14.8" fill="#fff" opacity=".6"/><path d="M648 699.5 H652 V707 H663.7 V711.3 H648Z" fill="#1b1b1b"/><rect x="652" y="699.5" width="11.7" height="7.5" fill="#ccc"/><path d="M677.8 698 H684 L686 700 H694.2 V711 H677.8Z" fill="#f2c234"/><rect x="677.8" y="701" width="16.4" height="10" fill="#fbd55a"/><rect x="681" y="706" width="10" height="5" fill="#1f7fd0"/><circle cx="714.8" cy="703.8" r="8" fill="#e0443a"/><path d="M714.8 703.8 L721.7 699.8 A8 8 0 0 1 718.8 710.7Z" fill="#f7c23c"/><path d="M714.8 703.8 L718.8 710.7 A8 8 0 0 1 707.9 699.8Z" fill="#2a9e4a"/><circle cx="714.8" cy="703.8" r="3.6" fill="#fff"/><circle cx="714.8" cy="703.8" r="2.8" fill="#2a74e0"/><rect x="731.7" y="691.8" width="25" height="25" rx="3" fill="#e4f2f5"/><path d="M738.2 697 H751 L752 702 Q751 708 744.6 711 Q738.2 708 737.2 702Z" fill="#f25a1f"/><path d="M741 701 L744.6 706 L748.2 701" stroke="#fff" stroke-width="1.2" fill="none"/><rect x="739.5" y="715" width="10.2" height="2" rx="1" fill="#1a6fc0"/><path d="M774.2 695.5 L782.8 704 L774.2 712.5 L765.6 704Z" fill="#7ed3a0" stroke="#3cb371" stroke-width="1"/><path d="M774.2 700 L778.2 704 L774.2 708 L770.2 704Z" fill="none" stroke="#fff" stroke-width="0.9"/><circle cx="802.5" cy="703.8" r="8.5" fill="#e45a5a"/><circle cx="802.5" cy="703.8" r="6" fill="none" stroke="#fff" stroke-width="1.2"/><path d="M800 701 L801 706 M803.5 701 L804.5 706" stroke="#fff" stroke-width="1.4"/><rect x="713.3" y="715" width="3" height="1.2" rx=".6" fill="#666"/><rect x="772.7" y="715" width="3" height="1.2" rx=".6" fill="#666"/><rect x="801.0" y="715" width="3" height="1.2" rx=".6" fill="#666"/><path d="M1123.5 706 L1127 702.5 L1130.5 706" stroke="#222" stroke-width="1.1" fill="none"/><rect x="1172.5" y="698.5" width="8.5" height="8" rx="1" fill="none" stroke="#333" stroke-width="1"/><circle cx="1181" cy="699" r="1.6" fill="#333"/><path d="M1174.5 708.5 H1179.5" stroke="#333" stroke-width="1.2"/><path d="M1188.5 701.5 H1190.5 L1193 699 V708 L1190.5 705.5 H1188.5Z" fill="none" stroke="#333" stroke-width="0.9"/><path d="M1195 701 Q1196.5 703.5 1195 706 M1197 699.5 Q1199.5 703.5 1197 707.5" stroke="#333" stroke-width="0.9" fill="none"/><path d="M1258 707 H1266 M1259 707 V702.5 Q1262 698 1265 702.5 V707 M1261 708.5 H1263" stroke="#333" stroke-width="1" fill="none"/></svg>
<div class="t" style="left:518.75px;top:699.95px;font-size:8.68px;color:#666;font-weight:400;">Search</div>
<div class="t" style="left:1144.5px;top:695.65px;font-size:7.5px;color:#333;font-weight:400;">ENG</div>
<div class="t" style="left:1148px;top:706.25px;font-size:7.5px;color:#333;font-weight:400;">IN</div>
<div class="t" style="right:29px;top:695.40px;font-size:7.8px;color:#222;text-align:right">13:37</div>
<div class="t" style="left:1210px;top:705.72px;font-size:8.13px;color:#333;font-weight:400;">02-11-2024</div>
</body></html>
